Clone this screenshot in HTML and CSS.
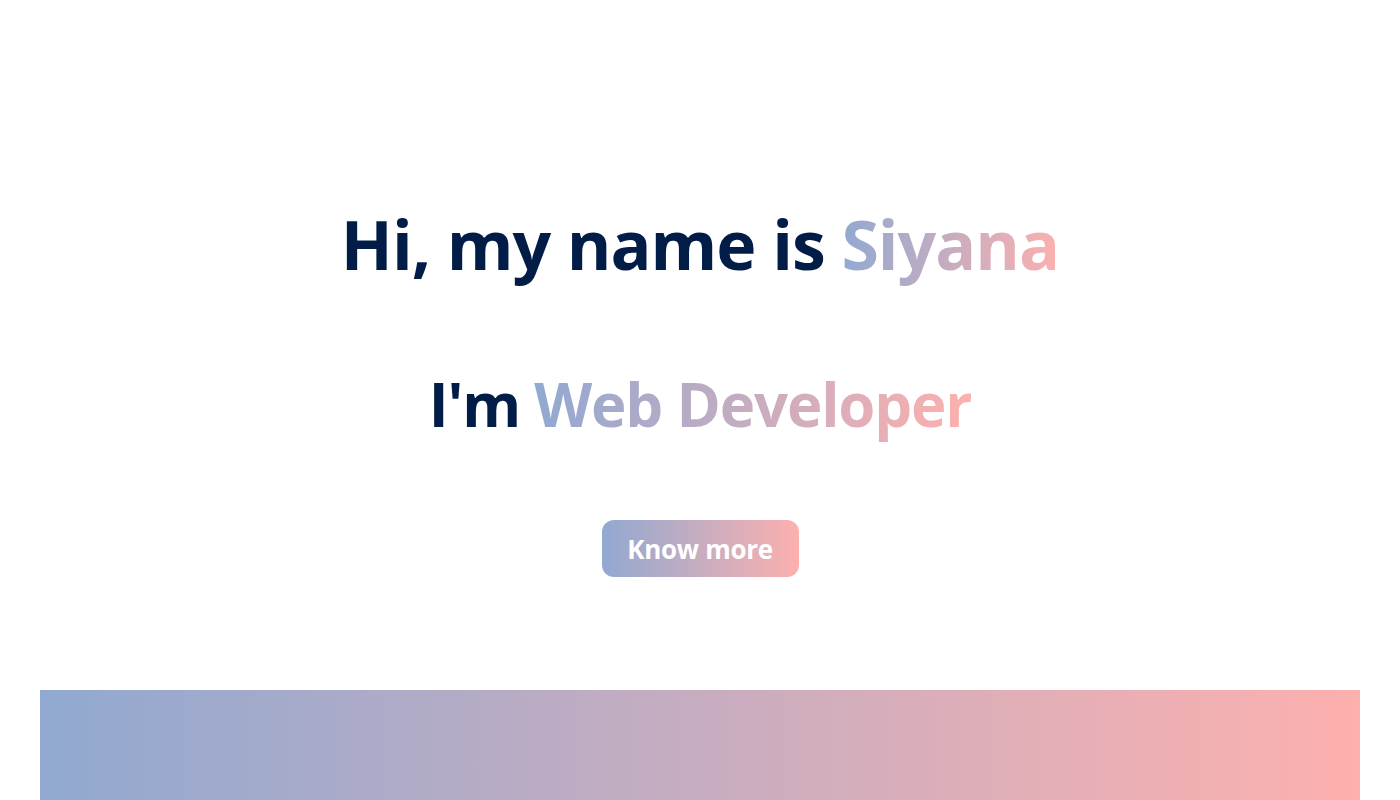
FILE: index.html
```html
<!DOCTYPE html>
<html lang="en">
<head>
<meta charset="utf-8">
<title>Siyana</title>
<link rel="stylesheet" href="styles.css">
</head>
<body>
<main class="page">
  <section class="hero">
    <h1 class="title">Hi, my name is <span class="grad">Siyana</span></h1>
    <h2 class="subtitle">I'm <span class="grad">Web Developer</span></h2>
    <a class="btn" href="#">Know more</a>
  </section>
  <section class="banner"></section>
</main>
</body>
</html>
```
FILE: styles.css
```css
* { box-sizing: border-box; }
html, body { margin: 0; padding: 0; background: #fff; }
body {
  font-family: "Open Sans", "Noto Sans", sans-serif;
  color: #011c47;
  overflow: hidden;
}
.page { padding: 0 40px; }
.hero {
  height: 690px;
  display: flex;
  flex-direction: column;
  align-items: center;
  padding-top: 194px;
}
.title {
  margin: 0;
  font-size: 68px;
  font-weight: 700;
  line-height: 100px;
  letter-spacing: -1px;
}
.subtitle {
  margin: 70px 0 0;
  font-size: 60px;
  font-weight: 700;
  line-height: 80px;
  letter-spacing: -1.2px;
}
.grad {
  background: linear-gradient(90deg, #91a9d1, #fdb0ae);
  -webkit-background-clip: text;
  background-clip: text;
  color: transparent;
}
.btn {
  margin-top: 76px;
  width: 197px;
  height: 57px;
  border-radius: 12px;
  display: flex;
  align-items: center;
  justify-content: center;
  background: linear-gradient(90deg, #91a9d1, #fdb0ae);
  color: #fff;
  font-size: 26px;
  font-weight: 700;
  text-decoration: none;
  letter-spacing: -0.3px;
}
.banner {
  height: 110px;
  background: linear-gradient(90deg, #91a9d1, #fdb0ae);
}
```
